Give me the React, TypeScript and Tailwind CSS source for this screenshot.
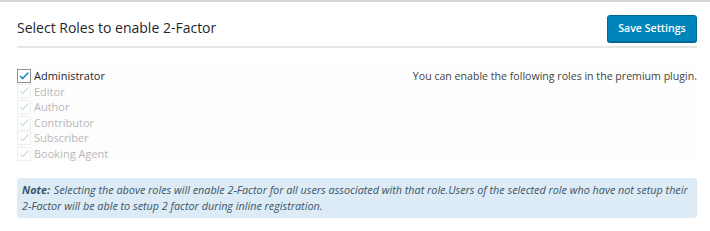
import React from 'react';

const roles = ['Administrator', 'Editor', 'Author', 'Contributor', 'Subscriber', 'Booking Agent'];

function Check({ active }: { active: boolean }) {
  return (
    <span
      className={[
        'flex h-[14px] w-[14px] shrink-0 items-center justify-center border',
        active ? 'border-[#8c8f94] bg-white' : 'border-[#eeeeee] bg-white',
      ].join(' ')}
    >
      <svg viewBox="0 0 20 20" className="h-[14px] w-[14px]">
        <path
          d="M4 10.5l3.8 3.8L16.5 5"
          fill="none"
          stroke={active ? '#1e8cbe' : '#c8dde8'}
          strokeWidth={active ? 2.6 : 2}
          strokeLinecap="round"
          strokeLinejoin="round"
        />
      </svg>
    </span>
  );
}

export default function App() {
  return (
    <div className="h-[231px] w-[710px] overflow-hidden border-t-2 border-[#d4d4d4] bg-white font-['Open_Sans',sans-serif] text-[#23282d]">
      <div className="pl-[17px] pr-[13px]">
        {/* Header */}
        <div className="flex items-end justify-between border-b-2 border-[#e6e6e6] pb-[3px] pt-[13px]">
          <h3 className="pb-[8px] text-[14px] leading-none text-[#23282d]">Select Roles to enable 2-Factor</h3>
          <button className="mb-[1px] h-[27px] w-[90px] rounded-[3px] border border-[#006799] bg-[#0085ba] text-[10.6px] font-semibold text-white shadow-[0_1px_0_#006799]">
            Save Settings
          </button>
        </div>

        {/* Roles */}
        <div className="mt-[16px] flex h-[98px] justify-between bg-[#fdfdfd] pt-[4px]">
          <div className="flex flex-col">
            {roles.map((role, i) => (
              <label key={role} className="flex h-[15.6px] items-center gap-[3px] text-[11px] leading-[15.6px]">
                <Check active={i === 0} />
                <span className={i === 0 ? 'text-[#23282d]' : 'text-[#b8b8b8]'}>{role}</span>
              </label>
            ))}
          </div>
          <p className="text-[10.6px] leading-[16px] text-[#444]">
            You can enable the following roles in the premium plugin.
          </p>
        </div>

        {/* Note */}
        <div className="mt-[16px] rounded-[3px] bg-[#dcebf5] px-[5px] py-[4px] text-[10.8px] italic leading-[16px] text-[#3d5567]">
          <b className="mr-[1px] font-bold">Note:</b> Selecting the above roles will enable 2-Factor for all users associated with that role.Users of the selected role who have not setup their 2-Factor will be able to setup 2 factor during inline registration.
        </div>
      </div>
    </div>
  );
}
